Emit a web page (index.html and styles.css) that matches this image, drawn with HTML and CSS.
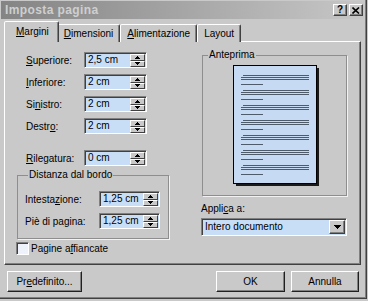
FILE: index.html
```html
<!DOCTYPE html>
<html>
<head>
<meta charset="utf-8">
<link rel="stylesheet" href="styles.css">
</head>
<body>
<div class="dialog">
  <div class="titlebar">
    <span class="title">Imposta pagina</span>
    <span class="tbtns">
      <span class="tbtn q">?</span>
      <span class="tbtn"><svg width="8" height="7" viewBox="0 0 8 7"><path d="M0.5 0.5 L7 6.5 M7 0.5 L0.5 6.5" stroke="#000" stroke-width="1.6"/></svg></span>
    </span>
  </div>

  <div class="tabs">
    <span class="tab sel"><u>M</u>argini</span>
    <span class="tab"><u>D</u>imensioni</span>
    <span class="tab"><u>A</u>limentazione</span>
    <span class="tab">Layout</span>
  </div>

  <div class="panel">
    <div class="left">
      <div class="rows">
        <div class="row"><span class="lbl"><u>S</u>uperiore:</span><span class="spinbox"><span class="val">2,5 cm</span><span class="spin"><span><svg width="5" height="3"><rect x="2" y="0" width="1" height="1"/><rect x="1" y="1" width="3" height="1"/><rect x="0" y="2" width="5" height="1"/></svg></span><span><svg width="5" height="3"><rect x="0" y="0" width="5" height="1"/><rect x="1" y="1" width="3" height="1"/><rect x="2" y="2" width="1" height="1"/></svg></span></span></span></div>
        <div class="row"><span class="lbl"><u>I</u>nferiore:</span><span class="spinbox"><span class="val">2 cm</span><span class="spin"><span><svg width="5" height="3"><rect x="2" y="0" width="1" height="1"/><rect x="1" y="1" width="3" height="1"/><rect x="0" y="2" width="5" height="1"/></svg></span><span><svg width="5" height="3"><rect x="0" y="0" width="5" height="1"/><rect x="1" y="1" width="3" height="1"/><rect x="2" y="2" width="1" height="1"/></svg></span></span></span></div>
        <div class="row"><span class="lbl">Si<u>n</u>istro:</span><span class="spinbox"><span class="val">2 cm</span><span class="spin"><span><svg width="5" height="3"><rect x="2" y="0" width="1" height="1"/><rect x="1" y="1" width="3" height="1"/><rect x="0" y="2" width="5" height="1"/></svg></span><span><svg width="5" height="3"><rect x="0" y="0" width="5" height="1"/><rect x="1" y="1" width="3" height="1"/><rect x="2" y="2" width="1" height="1"/></svg></span></span></span></div>
        <div class="row"><span class="lbl">Destr<u>o</u>:</span><span class="spinbox"><span class="val">2 cm</span><span class="spin"><span><svg width="5" height="3"><rect x="2" y="0" width="1" height="1"/><rect x="1" y="1" width="3" height="1"/><rect x="0" y="2" width="5" height="1"/></svg></span><span><svg width="5" height="3"><rect x="0" y="0" width="5" height="1"/><rect x="1" y="1" width="3" height="1"/><rect x="2" y="2" width="1" height="1"/></svg></span></span></span></div>
        <div class="row gap"><span class="lbl"><u>R</u>ilegatura:</span><span class="spinbox"><span class="val">0 cm</span><span class="spin"><span><svg width="5" height="3"><rect x="2" y="0" width="1" height="1"/><rect x="1" y="1" width="3" height="1"/><rect x="0" y="2" width="5" height="1"/></svg></span><span><svg width="5" height="3"><rect x="0" y="0" width="5" height="1"/><rect x="1" y="1" width="3" height="1"/><rect x="2" y="2" width="1" height="1"/></svg></span></span></span></div>
      </div>

      <fieldset class="group dist">
        <legend>Distanza dal bordo</legend>
        <div class="row"><span class="lbl wide">Intesta<u>z</u>ione:</span><span class="spinbox short"><span class="val">1,25 cm</span><span class="spin"><span><svg width="5" height="3"><rect x="2" y="0" width="1" height="1"/><rect x="1" y="1" width="3" height="1"/><rect x="0" y="2" width="5" height="1"/></svg></span><span><svg width="5" height="3"><rect x="0" y="0" width="5" height="1"/><rect x="1" y="1" width="3" height="1"/><rect x="2" y="2" width="1" height="1"/></svg></span></span></span></div>
        <div class="row"><span class="lbl wide">Piè di pa<u>g</u>ina:</span><span class="spinbox short"><span class="val">1,25 cm</span><span class="spin"><span><svg width="5" height="3"><rect x="2" y="0" width="1" height="1"/><rect x="1" y="1" width="3" height="1"/><rect x="0" y="2" width="5" height="1"/></svg></span><span><svg width="5" height="3"><rect x="0" y="0" width="5" height="1"/><rect x="1" y="1" width="3" height="1"/><rect x="2" y="2" width="1" height="1"/></svg></span></span></span></div>
      </fieldset>

      <div class="check"><span class="box"></span><span>Pagine a<u>f</u>fiancate</span></div>
    </div>

    <div class="right">
      <fieldset class="group preview">
        <legend>Anteprima</legend>
        <svg class="page" width="86" height="121" viewBox="0 0 86 121">
          <rect x="84" y="3" width="2" height="118" fill="#1a1a1a"/>
          <rect x="3" y="119" width="83" height="2" fill="#1a1a1a"/>
          <rect x="0.5" y="0.5" width="83" height="118" fill="#c6dbf3" stroke="#000"/>
          <g fill="#4d5b6b">
            <rect x="10" y="10" width="66" height="1"/><rect x="8" y="12" width="68" height="1"/><rect x="8" y="14" width="68" height="1"/><rect x="8" y="19" width="22" height="1"/>
            <rect x="10" y="25" width="66" height="1"/><rect x="8" y="27" width="68" height="1"/><rect x="8" y="29" width="68" height="1"/><rect x="8" y="34" width="22" height="1"/>
            <rect x="10" y="40" width="66" height="1"/><rect x="8" y="42" width="68" height="1"/><rect x="8" y="44" width="68" height="1"/><rect x="8" y="49" width="22" height="1"/>
            <rect x="10" y="55" width="66" height="1"/><rect x="8" y="57" width="68" height="1"/><rect x="8" y="59" width="68" height="1"/><rect x="8" y="64" width="22" height="1"/>
            <rect x="10" y="70" width="66" height="1"/><rect x="8" y="72" width="68" height="1"/><rect x="8" y="74" width="68" height="1"/><rect x="8" y="79" width="22" height="1"/>
            <rect x="10" y="85" width="66" height="1"/><rect x="8" y="87" width="68" height="1"/><rect x="8" y="89" width="68" height="1"/><rect x="8" y="94" width="22" height="1"/>
            <rect x="10" y="100" width="66" height="1"/><rect x="8" y="102" width="68" height="1"/><rect x="8" y="104" width="68" height="1"/><rect x="8" y="109" width="22" height="1"/>
          </g>
        </svg>
      </fieldset>
      <div class="applica">Appli<u>c</u>a a:</div>
      <div class="select"><span class="val">Intero documento</span><span class="drop"><svg width="7" height="4"><rect x="0" y="0" width="7" height="1"/><rect x="1" y="1" width="5" height="1"/><rect x="2" y="2" width="3" height="1"/><rect x="3" y="3" width="1" height="1"/></svg></span></div>
    </div>
  </div>

  <div class="buttons">
    <span class="btn pre">Pr<u>e</u>definito...</span>
    <span class="spacer"></span>
    <span class="btn ok">OK</span>
    <span class="btn cancel">Annulla</span>
  </div>
</div>
</body>
</html>
```

FILE: styles.css
```css
* { box-sizing: border-box; }
html, body { margin: 0; padding: 0; }
body {
  width: 368px;
  height: 301px;
  overflow: hidden;
  background: #c9c9c9;
  font: 10px "Liberation Sans", Arial, sans-serif;
  color: #000;
}
u { text-decoration: underline; text-underline-offset: 1px; }

.dialog {
  width: 367px;
  height: 299px;
  background: #c9c9c9;
  border-right: 1px solid #404040;
  border-bottom: 1px solid #404040;
  box-shadow: inset -1px -1px 0 #808080;
  display: flex;
  flex-direction: column;
  padding: 1px 2px 0 1px;
}

.titlebar {
  height: 18px;
  flex: none;
  background: linear-gradient(90deg, #848484, #c7c7c7);
  display: flex;
  align-items: center;
  justify-content: space-between;
  padding: 0 1px 0 4px;
}
.title {
  font-weight: bold;
  font-size: 12px;
  color: #cfcfcf;
  letter-spacing: 0.4px;
}
.tbtns { display: flex; gap: 2px; }
.tbtn {
  width: 14px;
  height: 12px;
  background: #c9c9c9;
  border: 1px solid;
  border-color: #fff #404040 #404040 #fff;
  box-shadow: inset -1px -1px 0 #808080;
  display: flex;
  align-items: center;
  justify-content: center;
}
.tbtn.q { font-size: 10px; font-weight: bold; line-height: 10px; }

.tabs {
  flex: none;
  display: flex;
  align-items: flex-end;
  height: 20px;
  margin-top: 3px;
  padding-left: 3px;
  position: relative;
  z-index: 1;
  margin-bottom: -1px;
}
.tab {
  height: 18px;
  padding: 3px 6px 0;
  border: 1px solid;
  border-bottom: none;
  border-color: #fff #404040 transparent #fff;
  border-radius: 2px 2px 0 0;
  box-shadow: inset -1px 0 0 #808080;
  background: #c9c9c9;
  white-space: nowrap;
}
.tab.sel {
  height: 21px;
  padding: 4px 9px 0 11px;
  margin-right: -2px;
  position: relative;
  z-index: 2;
}

.panel {
  flex: none;
  height: 224px;
  margin-left: 3px;
  width: 357px;
  border: 1px solid;
  border-color: #fff #404040 #404040 #fff;
  box-shadow: inset -1px -1px 0 #808080;
  display: grid;
  grid-template-columns: 197px 1fr;
}

.left { padding: 10px 0 0 0; display: flex; flex-direction: column; }
.rows { display: flex; flex-direction: column; gap: 6px; padding-left: 21px; }
.row { display: flex; align-items: center; height: 16px; }
.row.gap { margin-top: 10px; }
.lbl { width: 58px; white-space: nowrap; }
.lbl.wide { width: 74px; }

.spinbox {
  display: flex;
  width: 63px;
  height: 16px;
  border: 1px solid;
  border-color: #808080 #fff #fff #808080;
  box-shadow: inset 1px 1px 0 #404040;
  background: #c8def7;
}
.spinbox.short { width: 61px; }
.spinbox .val { flex: 1; padding-left: 3px; line-height: 14px; white-space: nowrap; }
.spin { width: 16px; display: flex; flex-direction: column; padding: 1px 1px 0 0; }
.spin span {
  flex: 1;
  background: #c9c9c9;
  border: 1px solid;
  border-color: #fff #404040 #404040 #fff;
  display: flex;
  align-items: center;
  justify-content: center;
}
.spin svg { display: block; }

.group {
  margin: 0;
  padding: 0;
  min-width: 0;
  border: 1px solid #8e8e8e;
  box-shadow: 1px 1px 0 #f2f2f2;
}
.group legend {
  padding: 0 1px;
  margin-left: 3px;
  line-height: 12px;
}
.dist {
  margin: 3px 0 0 12px;
  width: 152px;
  padding: 10px 0 9px 7px;
  display: flex;
  flex-direction: column;
  gap: 6px;
}

.check {
  display: flex;
  align-items: center;
  gap: 2px;
  margin: 3px 0 0 11px;
  height: 13px;
}
.box {
  width: 13px;
  height: 13px;
  border: 1px solid;
  border-color: #808080 #fff #fff #808080;
  box-shadow: inset 1px 1px 0 #404040;
  background: #eef2fb;
}

.right { padding-top: 7px; display: flex; flex-direction: column; }
.preview {
  width: 145px;
  display: flex;
  justify-content: center;
  padding: 4px 0 9px 2px;
}
.page { display: block; }
.applica { margin: 7px 0 0 -1px; line-height: 12px; }
.select {
  margin: 3px 0 0 -1px;
  width: 146px;
  height: 18px;
  display: flex;
  border: 1px solid;
  border-color: #808080 #fff #fff #808080;
  box-shadow: inset 1px 1px 0 #404040;
  background: #c8def7;
}
.select .val { flex: 1; padding: 0 0 0 3px; line-height: 16px; }
.drop {
  width: 16px;
  margin: 1px 1px 1px 0;
  background: #c9c9c9;
  border: 1px solid;
  border-color: #fff #404040 #404040 #fff;
  box-shadow: inset -1px -1px 0 #808080;
  display: flex;
  align-items: center;
  justify-content: center;
}
.drop svg { display: block; }

.buttons {
  flex: none;
  display: flex;
  margin-top: 6px;
  padding: 0 5px 0 6px;
  gap: 6px;
}
.spacer { flex: 1; }
.btn {
  height: 21px;
  border: 1px solid;
  border-color: #fff #202020 #202020 #fff;
  box-shadow: inset -1px -1px 0 #808080;
  background: #c9c9c9;
  display: flex;
  align-items: center;
  justify-content: center;
}
.btn.pre { width: 75px; }
.btn.ok { width: 69px; }
.btn.cancel { width: 68px; }
```
